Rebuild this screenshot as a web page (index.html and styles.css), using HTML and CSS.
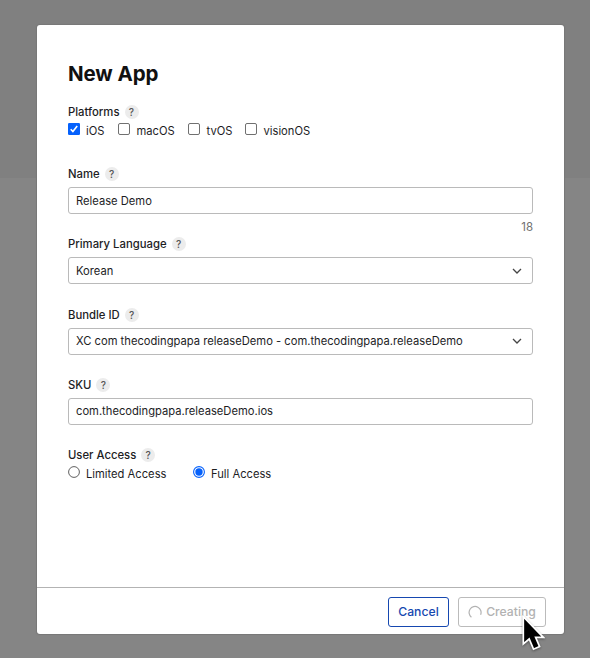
FILE: index.html
```html
<!DOCTYPE html>
<html lang="en">
<head>
<meta charset="utf-8">
<title>New App</title>
<link rel="stylesheet" href="styles.css">
</head>
<body>
<main class="modal">
  <form class="content">
    <h1>New App</h1>
    <section class="field platforms">
      <div class="label"><span>Platforms</span><i class="help">?</i></div>
      <div class="choices">
        <label class="choice ios"><svg class="box" viewBox="0 0 12 12"><rect width="12" height="12" rx="1.3" fill="#0561fc"/><path d="M2.7 6.2 4.9 8.5 9.2 2.9" fill="none" stroke="#fff" stroke-width="1.6"/></svg><span>iOS</span></label>
        <label class="choice macos"><span class="box empty"></span><span>macOS</span></label>
        <label class="choice tvos"><span class="box empty"></span><span>tvOS</span></label>
        <label class="choice"><span class="box empty"></span><span>visionOS</span></label>
      </div>
    </section>
    <section class="field">
      <div class="label"><span>Name</span><i class="help">?</i></div>
      <div class="control"><span>Release Demo</span></div>
      <div class="count">18</div>
    </section>
    <section class="field">
      <div class="label"><span>Primary Language</span><i class="help">?</i></div>
      <div class="control"><span>Korean</span><svg class="chevron" viewBox="0 0 10 6"><path d="M1 1 5 5 9 1"/></svg></div>
    </section>
    <section class="field">
      <div class="label"><span>Bundle ID</span><i class="help">?</i></div>
      <div class="control"><span>XC com thecodingpapa releaseDemo - com.thecodingpapa.releaseDemo</span><svg class="chevron" viewBox="0 0 10 6"><path d="M1 1 5 5 9 1"/></svg></div>
    </section>
    <section class="field">
      <div class="label"><span>SKU</span><i class="help">?</i></div>
      <div class="control"><span>com.thecodingpapa.releaseDemo.ios</span></div>
    </section>
    <section class="field">
      <div class="label"><span>User Access</span><i class="help">?</i></div>
      <div class="choices">
        <label class="choice limited"><svg class="box" viewBox="0 0 12 12"><circle cx="6" cy="6" r="5.4" fill="#fff" stroke="#606060"/></svg><span>Limited Access</span></label>
        <label class="choice"><svg class="box" viewBox="0 0 12 12"><circle cx="6" cy="6" r="5.4" fill="#fff" stroke="#0561fc" stroke-width="1.1"/><circle cx="6" cy="6" r="3.7" fill="#0561fc"/></svg><span>Full Access</span></label>
      </div>
    </section>
  </form>
  <footer>
    <div class="button cancel">Cancel</div>
    <div class="button creating"><svg class="spinner" viewBox="0 0 14 14"><path d="M3.4 12.2A6 6 0 1 1 12.6 9.8"/></svg><span>Creating</span></div>
  </footer>
</main>
<svg class="cursor" viewBox="0 0 24 38"><path d="M2.3 1.7V29L8.2 24 12.5 34.2 18.6 31.6 14.6 22.3H22.3Z"/></svg>
</body>
</html>
```
FILE: styles.css
```css
* { box-sizing: border-box; }
body {
  margin: 0;
  height: 658px;
  padding: 25px 26px 24px 37px;
  overflow: hidden;
  background: linear-gradient(#808080 178px, #858585 178px);
  font: 11.2px/14px Inter, sans-serif;
  color: #1d1d1f;
}
.modal {
  display: flex;
  flex-direction: column;
  height: 609px;
  background: #fff;
  border-radius: 3px;
  box-shadow: 0 0 1px 1px #777;
}
.content { flex: 1; padding: 36px 31px 0; }
h1 { margin: 0 0 18px; font-size: 20.5px; line-height: 26px; font-weight: 650; letter-spacing: -0.1px; color: #111; }
.field { height: 70.3px; }
.platforms { height: 62px; }
.label { display: flex; align-items: center; height: 14px; gap: 5px; font-size: 11.3px; font-weight: 500; }
.help {
  width: 14px; height: 14px; border-radius: 50%;
  background: #ececec; color: #555;
  font-size: 10px; font-style: normal; text-align: center;
}
.control {
  display: flex; align-items: center; justify-content: space-between;
  height: 27px; margin-top: 6px; padding: 0 10px 0 7px;
  border: 1px solid #bababa; border-radius: 3px;
}
.chevron { width: 10px; height: 6px; }
.chevron path { fill: none; stroke: #444; stroke-width: 1.3; }
.count { margin-top: 6px; text-align: right; font-size: 11.5px; color: #707070; }
.choices { display: flex; margin-top: 4px; height: 14px; }
.choice { display: flex; gap: 6.5px; line-height: 16px; }
.box { width: 12px; height: 12px; flex: none; margin-left: -0.5px; }
.empty { border: 1px solid #707070; border-radius: 2px; margin-left: 0; }
.ios { width: 50px; }
.macos { width: 70px; }
.tvos { width: 57px; }
.limited { width: 125px; }
footer {
  display: flex; justify-content: flex-end; gap: 9px;
  height: 47px; padding: 9px 18px 0 0; border-top: 1px solid #b3b3b3;
}
.button {
  display: flex; align-items: center; justify-content: center;
  height: 30px; border: 1px solid; border-radius: 3px;
  font-size: 12.2px; font-weight: 500;
}
.cancel { width: 61px; border-color: #1648b0; color: #1648b0; }
.creating { width: 88px; border-color: #bbb; color: #b2b2b2; gap: 4px; }
.spinner { width: 14px; height: 14px; }
.spinner path { fill: none; stroke: #b2b2b2; stroke-width: 1.2; }
.cursor { position: absolute; left: 521px; top: 615px; width: 24px; height: 38px; filter: drop-shadow(0 1px 1px #0006); }
.cursor path { fill: #000; stroke: #fff; stroke-width: 1.7; }
```
